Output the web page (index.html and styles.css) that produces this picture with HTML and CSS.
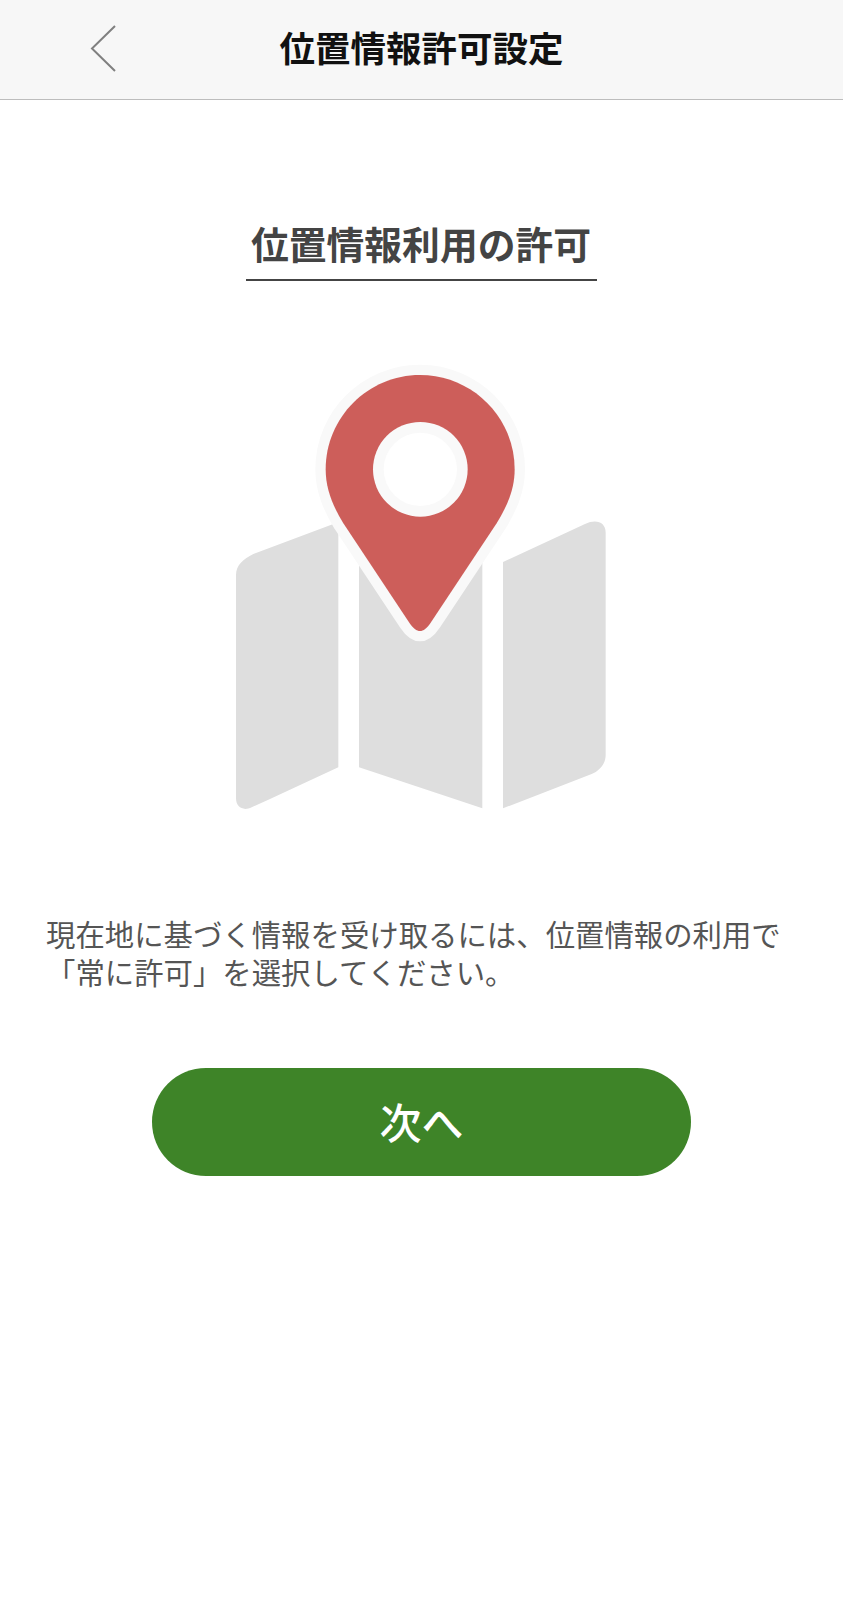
FILE: index.html
```html
<!DOCTYPE html>
<html lang="ja">
<head>
  <meta charset="UTF-8">
  <meta name="viewport" content="width=device-width, initial-scale=1.0">
  <title>位置情報許可設定</title>
  <link rel="stylesheet" href="styles.css">
</head>
<body>
  <header class="app-header">
    <a class="back-link" href="#" aria-label="戻る">
      <svg class="back-icon" viewBox="0 0 26 47" width="26" height="47">
        <path d="M25 1 L2 23.5 L25 46" />
      </svg>
    </a>
    <h1 class="app-title">位置情報許可設定</h1>
  </header>

  <main class="content">
    <h2 class="section-title">位置情報利用の許可</h2>

    <svg class="map-icon" viewBox="0 0 1200 1410" width="400" height="470">
      <path class="map-panel" d="M355 1252 L150 1347 L95 1372 C70 1384 48 1372 48 1345 L48 675 C48 645 70 627 100 612 L340 522 L355 522 Z" />
      <path class="map-panel" d="M417 600 L787 600 L787 1375 L417 1252 Z" />
      <path class="map-panel" d="M849 636 L1095 522 C1128 506 1157 516 1157 548 L1157 1215 C1157 1240 1140 1262 1115 1272 L849 1375 Z" />
      <path class="pin-halo" d="M600 75 C757 75 884 202 884 358 C884 420 860 470 830 520 L634 815 C620 836 610 843 600 843 C590 843 580 836 566 815 L370 520 C340 470 317 420 317 358 C317 202 444 75 600 75 Z" />
      <path class="pin" d="M600 75 C757 75 884 202 884 358 C884 420 860 470 830 520 L634 815 C620 836 610 843 600 843 C590 843 580 836 566 815 L370 520 C340 470 317 420 317 358 C317 202 444 75 600 75 Z" />
      <circle class="pin-ring" cx="601" cy="358" r="142" />
      <circle class="pin-hole" cx="601" cy="358" r="110" />
    </svg>

    <p class="description">現在地に基づく情報を受け取るには、位置情報の利用で<br>「常に許可」を選択してください。</p>

    <button class="next-button" type="button">次へ</button>
  </main>
</body>
</html>
```

FILE: styles.css
```css
body {
  font-family: "Noto Sans CJK JP", "Noto Sans", sans-serif;
  background-color: #fff;
  margin: 0;
}

.app-header {
  display: flex;
  align-items: center;
  height: 99px;
  padding-left: 90px;
  background-color: #f7f7f7;
  border-bottom: 1px solid #bdbdbd;
  position: relative;
}

.back-link {
  display: block;
  height: 47px;
  margin-top: -3px;
}

.back-icon path {
  fill: none;
  stroke: #808080;
  stroke-width: 2;
}

.app-title {
  position: absolute;
  left: 0;
  right: 0;
  top: 0;
  margin: 0;
  text-align: center;
  font-size: 35.5px;
  font-weight: 700;
  line-height: 93px;
  color: #111;
}

.content {
  display: flow-root;
}

.section-title {
  width: 350px;
  margin: 118px 0 0 246px;
  padding: 0 1px 11px 0;
  border-bottom: 2px solid #444;
  text-align: center;
  font-size: 37.8px;
  font-weight: 700;
  line-height: 50px;
  color: #444;
}

.map-icon {
  display: block;
  margin: 69px 0 0 220px;
}

.map-panel {
  fill: #dedede;
}

.pin-halo {
  fill: #f9f9f9;
  stroke: #f9f9f9;
  stroke-width: 62;
  stroke-linejoin: round;
}

.pin {
  fill: #cd5e5a;
}

.pin-ring {
  fill: #f9f9f9;
}

.pin-hole {
  fill: #fff;
}

.description {
  margin: 94px 0 0 46px;
  font-size: 29.4px;
  line-height: 38px;
  color: #555;
}

.next-button {
  display: block;
  width: 539px;
  height: 108px;
  margin: 78px 0 0 152px;
  padding: 0 0 4px;
  border: none;
  border-radius: 54px;
  background-color: #3e8428;
  color: #fff;
  font-family: inherit;
  font-size: 42px;
  font-weight: 500;
}
```
